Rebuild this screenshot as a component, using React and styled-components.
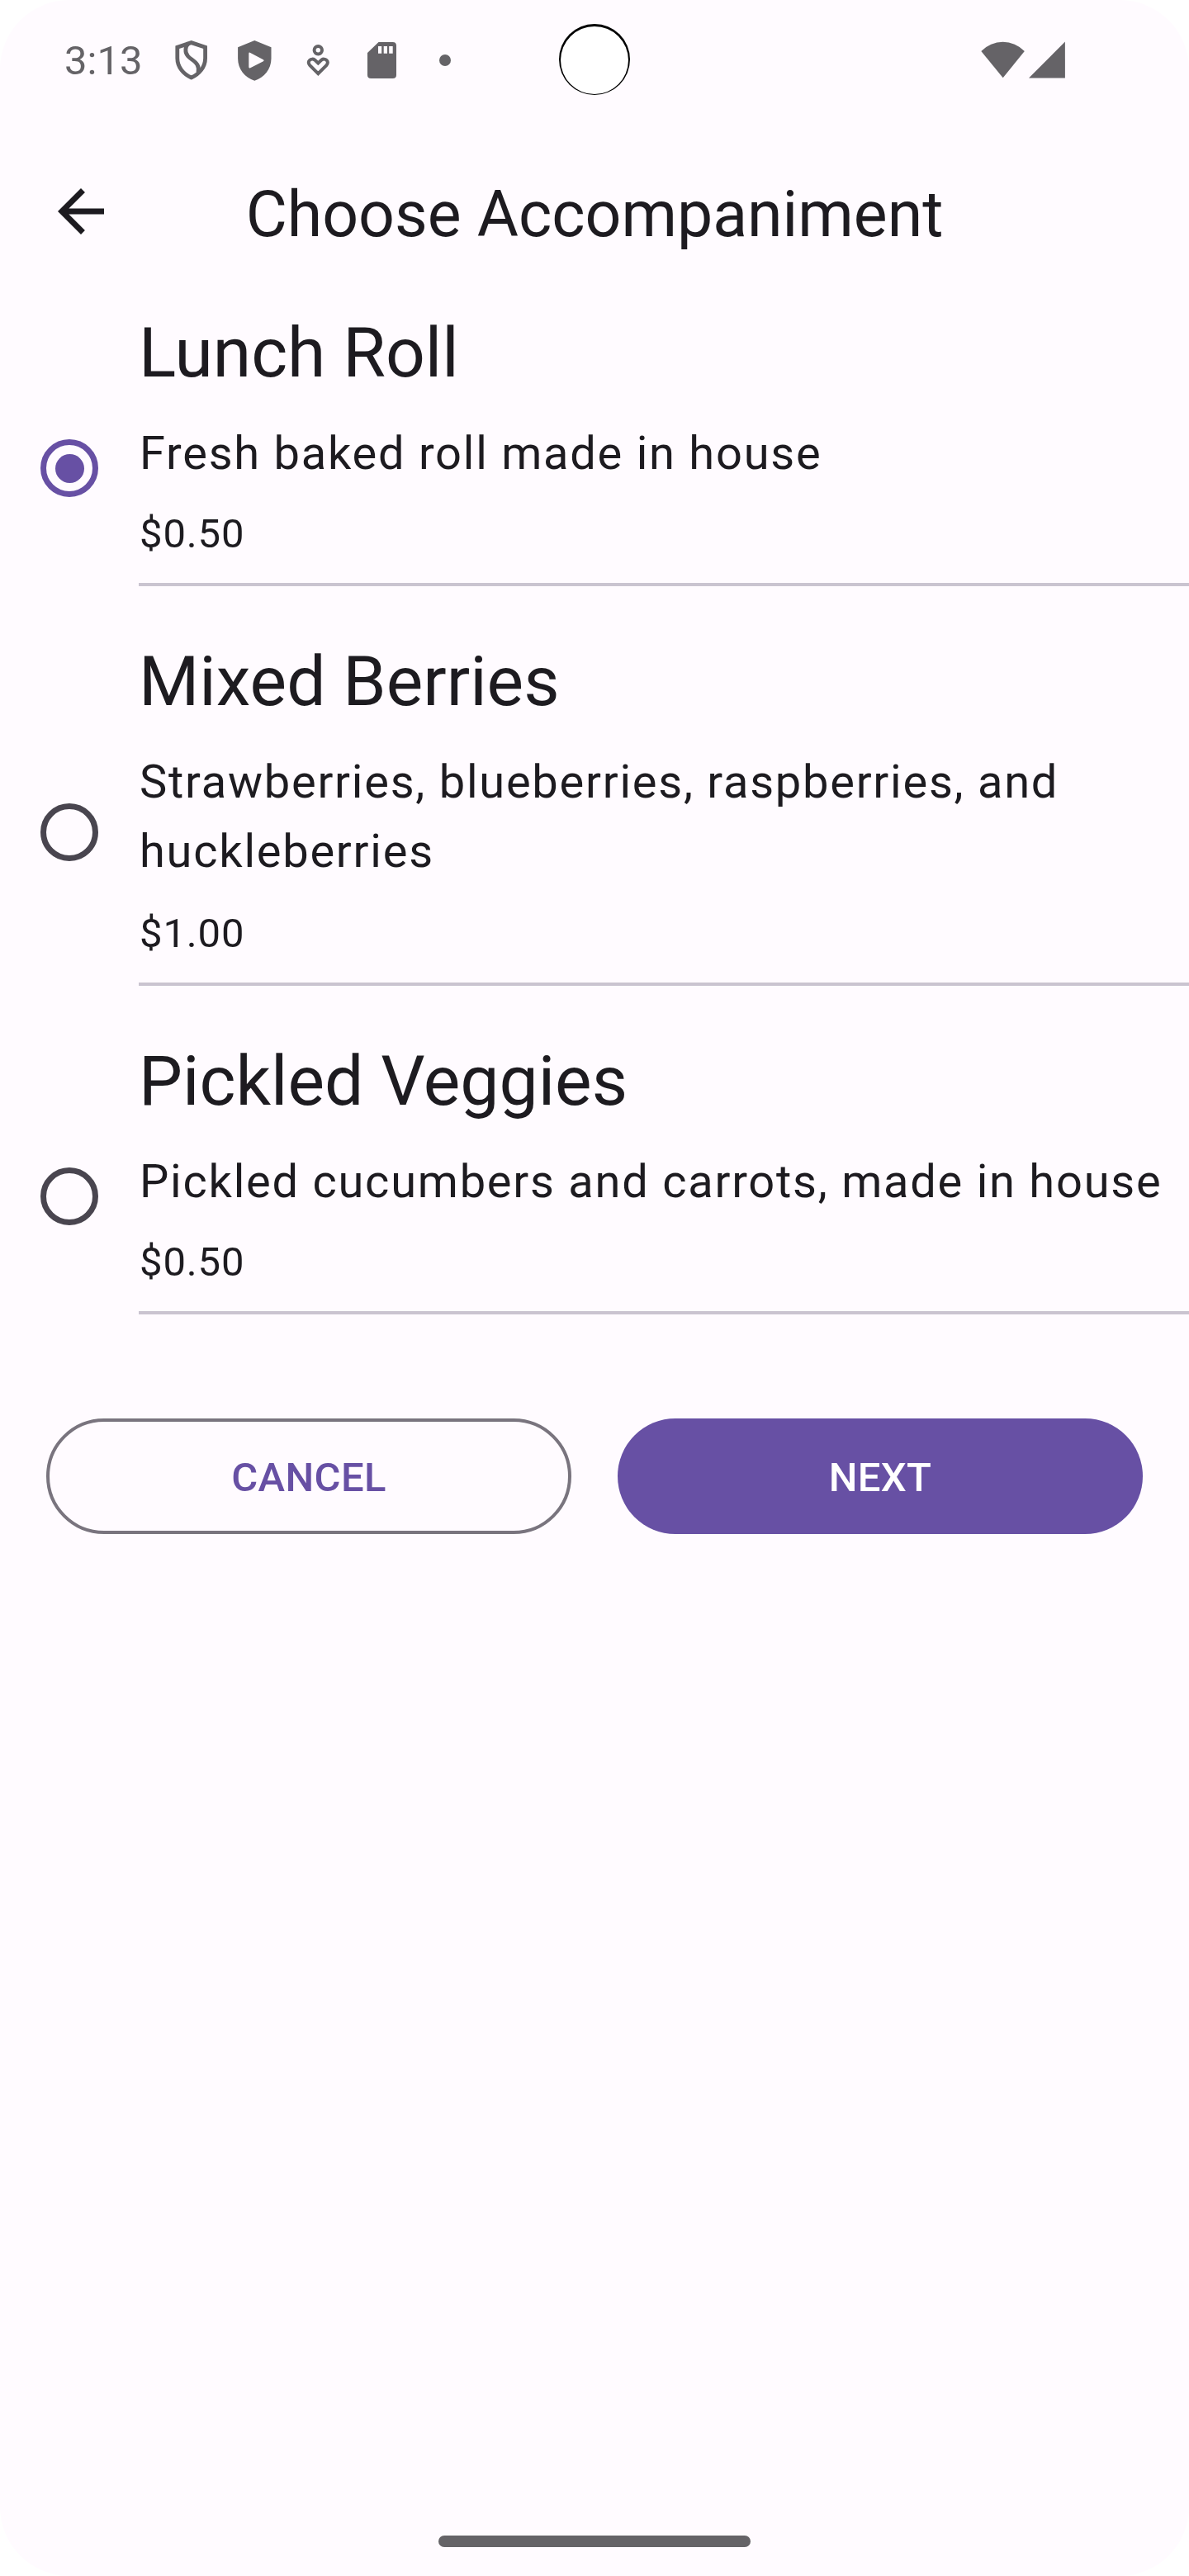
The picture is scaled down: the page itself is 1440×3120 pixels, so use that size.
import React, { useState } from "react";
import styled, { createGlobalStyle } from "styled-components";

const INK = "#1d1b20";
const PRIMARY = "#6750a4";
const SURFACE = "#fffbff";
const STATUS = "#656367";

const GlobalStyle = createGlobalStyle`
  *, *::before, *::after { box-sizing: border-box; }
  body { margin: 0; background: #ffffff; }
`;

const Screen = styled.div`
  position: relative;
  display: flex;
  flex-direction: column;
  width: 1440px;
  height: 3120px;
  overflow: hidden;
  border-radius: 84px;
  background: ${SURFACE};
  color: ${INK};
  font-family: Roboto, "Noto Sans", sans-serif;
`;

const StatusBar = styled.div`
  display: flex;
  align-items: center;
  height: 144px;
  padding: 2px 150px 0 78px;
  color: ${STATUS};
`;

const Clock = styled.span`
  width: 115px;
  padding-top: 2px;
  font-size: 49px;
  line-height: 60px;
`;

const StatusIcons = styled.div`
  display: flex;
  align-items: center;
  gap: ${(p) => p.$gap || 0}px;
  margin-left: ${(p) => (p.$end ? "auto" : "0")};

  svg { display: block; }
`;

const Cutout = styled.div`
  position: absolute;
  top: 29px;
  left: 677px;
  width: 86px;
  height: 86px;
  padding: 3px 2px 1px;
  border-radius: 50%;
  background: #000000;

  &::before {
    content: "";
    display: block;
    width: 82px;
    height: 82px;
    border-radius: 50%;
    background: #ffffff;
  }
`;

const AppBar = styled.header`
  display: grid;
  grid-template-columns: 84px 1fr 84px;
  align-items: center;
  height: 224px;
  padding: 0 56px;
`;

const BackButton = styled.button`
  width: 84px;
  height: 84px;
  padding: 0;
  border: 0;
  background: none;
  color: ${INK};

  svg { display: block; }
`;

const Title = styled.h1`
  margin: 0;
  padding-top: 7px;
  font-size: 77px;
  font-weight: 400;
  line-height: 98px;
  text-align: center;
  white-space: nowrap;
`;

const Options = styled.div`
  display: flex;
  flex-direction: column;
`;

const Option = styled.div`
  display: flex;
  align-items: center;
`;

const RadioSlot = styled.div`
  display: flex;
  justify-content: center;
  flex: 0 0 168px;
`;

const Radio = styled.span`
  display: flex;
  align-items: center;
  justify-content: center;
  width: 70px;
  height: 70px;
  border: 7px solid ${(p) => (p.$on ? PRIMARY : "#49454f")};
  border-radius: 50%;

  &::after {
    content: "";
    width: 35px;
    height: 35px;
    border-radius: 50%;
    background: ${(p) => (p.$on ? PRIMARY : "transparent")};
  }
`;

const Details = styled.div`
  display: flex;
  flex-direction: column;
  flex: 1;
  min-width: 0;
  padding: 4px 0 56px;
`;

const Name = styled.h2`
  margin: 0;
  font-size: 84px;
  font-weight: 400;
  line-height: 112px;
`;

const Description = styled.p`
  margin: 23px 0 ${(p) => (p.$wraps ? 23 : 21)}px;
  padding-left: 1px;
  font-size: 56px;
  line-height: 84px;
  letter-spacing: 1.75px;
`;

const Price = styled.span`
  padding-left: 1px;
  font-size: 49px;
  line-height: 70px;
  letter-spacing: 0.875px;
`;

const Divider = styled.hr`
  width: 100%;
  height: 4px;
  margin: 24px 0 0;
  border: 0;
  background: #cac4d0;
`;

const Actions = styled.div`
  display: grid;
  grid-template-columns: 1fr 1fr;
  gap: 56px;
  padding: 70px 56px 0;
`;

const Action = styled.button`
  height: 140px;
  padding: 4px 0 0;
  border: ${(p) => (p.$filled ? "0" : "4px solid #79747e")};
  border-radius: 70px;
  background: ${(p) => (p.$filled ? PRIMARY : "transparent")};
  color: ${(p) => (p.$filled ? "#ffffff" : PRIMARY)};
  font-family: inherit;
  font-size: 49px;
  font-weight: 500;
  line-height: 70px;
  letter-spacing: 0.35px;
`;

const NavigationBar = styled.div`
  display: flex;
  justify-content: center;
  margin-top: auto;
  padding-bottom: 35px;
`;

const Handle = styled.span`
  width: 378px;
  height: 14px;
  border-radius: 7px;
  background: ${STATUS};
`;

const Slot = ({ width = 77, children }) => (
  <svg width={width} height="60" viewBox={`0 0 ${width} 60`} fill="currentColor">
    {children}
  </svg>
);

const menu = [
  { name: "Lunch Roll", description: "Fresh baked roll made in house", price: "$0.50" },
  {
    name: "Mixed Berries",
    description: "Strawberries, blueberries, raspberries, and huckleberries",
    price: "$1.00",
    wraps: true,
  },
  {
    name: "Pickled Veggies",
    description: "Pickled cucumbers and carrots, made in house",
    price: "$0.50",
  },
];

export default function App() {
  const [selected, setSelected] = useState("Lunch Roll");

  return (
    <>
      <GlobalStyle />
      <Screen>
        <StatusBar>
          <Clock>3:13</Clock>
          <StatusIcons>
            <Slot>
              <g fill="none" stroke="currentColor" strokeWidth="4.8">
                <path d="M38.7 8.6 L21.8 14.2 V27.5 C21.8 38.5 29.5 47 38.7 51 C47.9 47 55.6 38.5 55.6 27.5 V14.2 Z" />
                <path d="M35.5 9.5 C31 13 30.6 20.5 34.6 25 C38 28.8 43.5 31 46 35.5 C47.8 38.8 47.8 41.5 47 45" />
              </g>
            </Slot>
            <Slot>
              <path
                fillRule="evenodd"
                d="M38.3 6 L58.5 14.3 V28 C58.5 40.5 50 51 38.3 54.8 C26.6 51 18.1 40.5 18.1 28 V14.3 Z M31.3 22 V38 Q31.3 40 33.2 39.2 L48.9 31.2 Q50.5 30.2 48.9 29.2 L33.2 20.9 Q31.3 20 31.3 22 Z"
              />
            </Slot>
            <Slot>
              <g fill="none" stroke="currentColor" strokeWidth="4">
                <circle cx="38.3" cy="17.8" r="4.7" />
                <path d="M38.3 46.2 L28.3 36.1 C26.3 33.9 26.3 31.4 28 29.9 C29.7 28.3 32.4 28.2 34.2 29.6 L38.3 33.4 L42.4 29.6 C44.2 28.2 46.9 28.3 48.6 29.9 C50.3 31.4 50.3 33.9 48.3 36.1 Z" />
              </g>
            </Slot>
            <Slot>
              <path
                fillRule="evenodd"
                d="M34.5 8 H51.7 Q56 8 56 12.3 V48 Q56 52 51.7 52 H25.3 Q21 52 21 48 V21 Z M34 13 V21.7 H38.2 V13 Z M40.7 13 V21.7 H45 V13 Z M47.2 13 V21.7 H51.7 V13 Z"
              />
            </Slot>
            <Slot>
              <circle cx="38" cy="30" r="7" />
            </Slot>
          </StatusIcons>
          <StatusIcons $end $gap={5}>
            <Slot width={53}>
              <path d="M26.7 51.3 L0.3 19 A36.5 36.5 0 0 1 52.8 19 Z" />
            </Slot>
            <Slot width={44}>
              <path d="M0 51.5 L43.9 7.5 V51.5 Z" />
            </Slot>
          </StatusIcons>
        </StatusBar>
        <Cutout />

        <AppBar>
          <BackButton aria-label="Back">
            <svg width="84" height="84" viewBox="0 0 24 24" fill="currentColor">
              <path d="M20 11H7.83l5.59-5.59L12 4l-8 8 8 8 1.41-1.41L7.83 13H20v-2z" />
            </svg>
          </BackButton>
          <Title>Choose Accompaniment</Title>
        </AppBar>

        <Options role="radiogroup">
          {menu.map(({ name, description, price, wraps }) => (
            <Option
              key={name}
              role="radio"
              aria-checked={name === selected}
              onClick={() => setSelected(name)}
            >
              <RadioSlot>
                <Radio $on={name === selected} />
              </RadioSlot>
              <Details>
                <Name>{name}</Name>
                <Description $wraps={wraps}>{description}</Description>
                <Price>{price}</Price>
                <Divider />
              </Details>
            </Option>
          ))}
        </Options>

        <Actions>
          <Action>CANCEL</Action>
          <Action $filled>NEXT</Action>
        </Actions>

        <NavigationBar>
          <Handle />
        </NavigationBar>
      </Screen>
    </>
  );
}
